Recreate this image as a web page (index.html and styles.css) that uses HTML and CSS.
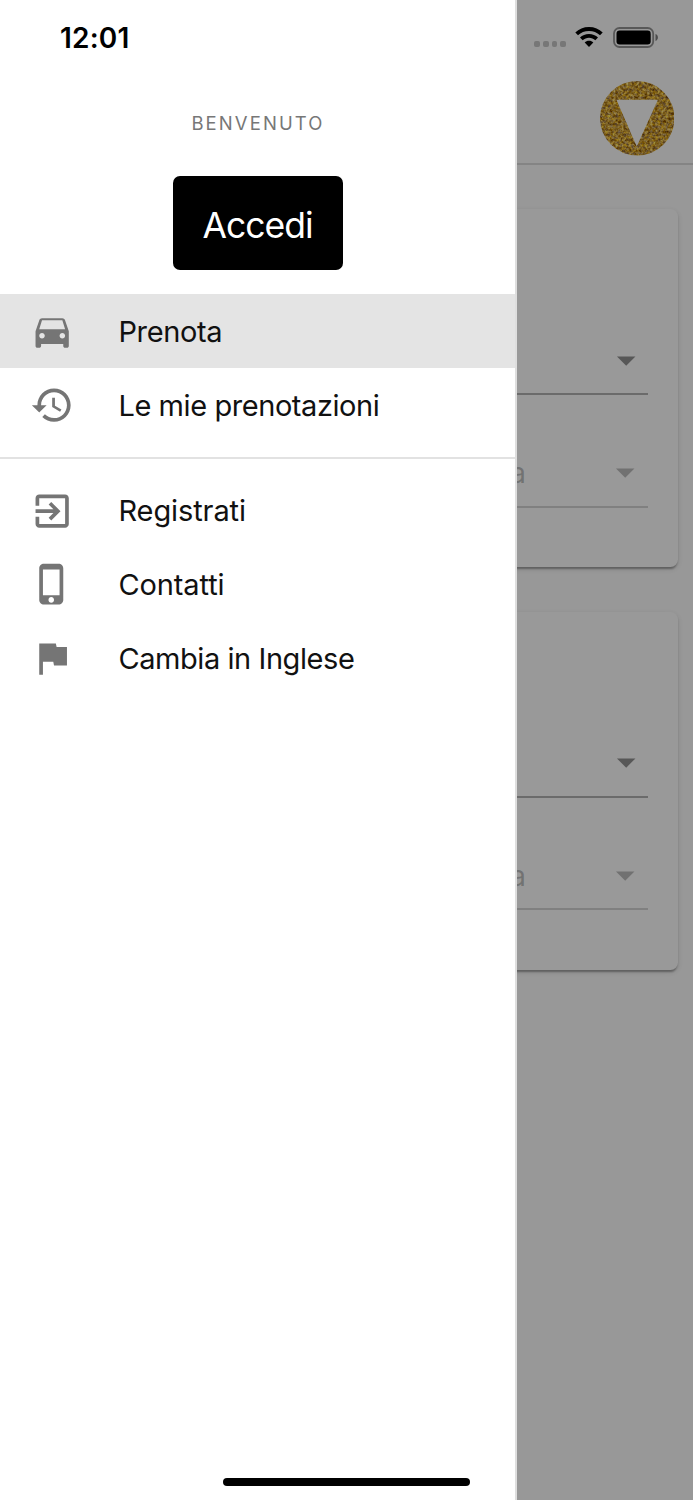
FILE: index.html
```html
<!DOCTYPE html>
<html lang="it">
<head>
    <meta charset="utf-8">
    <title>Prenota</title>
    <link rel="stylesheet" href="styles.css">
</head>
<body>

    <!-- Booking page -->
    <div class="page">
        <header class="app-bar">
            <svg class="logo" viewBox="0 0 74 74">
                <defs>
                    <filter id="glitter" x="0" y="0" width="100%" height="100%" color-interpolation-filters="sRGB">
                        <feTurbulence type="fractalNoise" baseFrequency="0.38" numOctaves="3" seed="7" result="noise"/>
                        <feColorMatrix in="noise" type="matrix" values="1 0 0 0 0.3  1 0.2 0 0 0.02  0.5 0.8 0 0 -0.42  0 0 0 0 1"/>
                        <feComposite in2="SourceGraphic" operator="in"/>
                    </filter>
                </defs>
                <path filter="url(#glitter)" fill="#c48c2a" fill-rule="evenodd" d="M37 0a37 37 0 1 1 0 74a37 37 0 1 1 0-74zM16.3 18.5L36.5 65L57.5 18.5z"/>
            </svg>
        </header>
        <main class="cards">
            <div class="card">
                <div class="field">
                    <svg class="icon" viewBox="0 0 24 24"><path d="M7 10l5 5 5-5z"/></svg>
                </div>
                <div class="field disabled">
                    <span class="value">a</span>
                    <svg class="icon" viewBox="0 0 24 24"><path d="M7 10l5 5 5-5z"/></svg>
                </div>
            </div>
            <div class="card">
                <div class="field">
                    <svg class="icon" viewBox="0 0 24 24"><path d="M7 10l5 5 5-5z"/></svg>
                </div>
                <div class="field disabled">
                    <span class="value">a</span>
                    <svg class="icon" viewBox="0 0 24 24"><path d="M7 10l5 5 5-5z"/></svg>
                </div>
            </div>
        </main>
    </div>

    <div class="backdrop"></div>

    <!-- Side menu -->
    <nav class="drawer">
        <div class="welcome">Benvenuto</div>
        <button class="login">Accedi</button>
        <ul class="menu">
            <li class="selected">
                <svg class="icon" viewBox="0 0 24 24"><path d="M18.92 6.01C18.72 5.42 18.16 5 17.5 5h-11c-.66 0-1.21.42-1.42 1.01L3 12v8c0 .55.45 1 1 1h1c.55 0 1-.45 1-1v-1h12v1c0 .55.45 1 1 1h1c.55 0 1-.45 1-1v-8l-2.08-5.99zM6.5 16c-.83 0-1.5-.67-1.5-1.5S5.67 13 6.5 13s1.5.67 1.5 1.5S7.33 16 6.5 16zm11 0c-.83 0-1.5-.67-1.5-1.5s.67-1.5 1.5-1.5 1.5.67 1.5 1.5-.67 1.5-1.5 1.5zM5 11l1.5-4.9h11L19 11H5z"/></svg>
                <span>Prenota</span>
            </li>
            <li>
                <svg class="icon" viewBox="0 0 24 24"><path d="M13 3c-4.97 0-9 4.03-9 9H1l3.89 3.89.07.14L9 12H6c0-3.87 3.13-7 7-7s7 3.13 7 7-3.13 7-7 7c-1.93 0-3.68-.79-4.94-2.06l-1.42 1.42C8.27 19.99 10.51 21 13 21c4.97 0 9-4.03 9-9s-4.03-9-9-9zm-1 5v5l4.28 2.54.72-1.21-3.5-2.08V8H12z"/></svg>
                <span class="tight">Le mie prenotazioni</span>
            </li>
        </ul>
        <ul class="menu">
            <li>
                <svg class="icon" viewBox="0 0 24 24"><path d="M10.09 15.59L11.5 17l5-5-5-5-1.41 1.41L12.67 11H3v2h9.67l-2.58 2.59zM19 3H5c-1.11 0-2 .9-2 2v4h2V5h14v14H5v-4H3v4c0 1.1.89 2 2 2h14c1.1 0 2-.9 2-2V5c0-1.1-.9-2-2-2z"/></svg>
                <span class="loose">Registrati</span>
            </li>
            <li>
                <svg class="icon" viewBox="0 0 24 24"><path d="M15.5 1h-8C6.12 1 5 2.12 5 3.5v17C5 21.88 6.12 23 7.5 23h8c1.38 0 2.5-1.12 2.5-2.5v-17C18 2.12 16.88 1 15.5 1zm-4 21c-.83 0-1.5-.67-1.5-1.5s.67-1.5 1.5-1.5 1.5.67 1.5 1.5-.67 1.5-1.5 1.5zm4.5-4H7V4h9v14z"/></svg>
                <span class="loose">Contatti</span>
            </li>
            <li>
                <svg class="icon" viewBox="0 0 24 24"><path d="M14.4 6L14 4H5v17h2v-7h5.6l.4 2h7V6z"/></svg>
                <span class="tight">Cambia in Inglese</span>
            </li>
        </ul>
    </nav>

    <!-- Phone status bar and home indicator -->
    <div class="status-bar">
        <span class="time">12:01</span>
        <div class="signal"><i></i><i></i><i></i><i></i></div>
        <svg class="wifi" viewBox="0 0 28 20">
            <path d="M14 0C19.4 0 24.2 2 27.7 5.5L25 8.3C22.1 5.5 18.3 4 14 4S5.9 5.5 3 8.3L.3 5.5C3.8 2 8.6 0 14 0z"/>
            <path d="M14 7C17.5 7 20.7 8.3 23 10.6L20.3 13.3C18.6 11.7 16.4 10.8 14 10.8S9.4 11.7 7.7 13.3L5 10.6C7.3 8.3 10.5 7 14 7z"/>
            <path d="M14 13.7C15.7 13.7 17.2 14.3 18.3 15.4L14 19.9L9.7 15.4C10.8 14.3 12.3 13.7 14 13.7z"/>
        </svg>
        <svg class="battery" viewBox="0 0 46 21">
            <rect x="1" y="1" width="39.2" height="19" rx="5.5" fill="none" stroke="#000" stroke-opacity=".42" stroke-width="1.8"/>
            <rect x="3.5" y="3.5" width="34.2" height="14" rx="3.2"/>
            <path d="M42.5 7c1.5.6 2.4 1.9 2.4 3.5s-.9 2.9-2.4 3.5z" fill-opacity=".5"/>
        </svg>
    </div>
    <div class="home-indicator"></div>

</body>
</html>
```
FILE: styles.css
```css
* {
    box-sizing: border-box;
}

body {
    margin: 0;
    height: 1500px;
    position: relative;
    overflow: hidden;
    background: #fff;
    font-family: Inter, Roboto, sans-serif;
    color: #111;
}

/* Booking page */
.page {
    height: 1500px;
    background: #fefefe;
}

.app-bar {
    height: 165px;
    padding: 81px 19px 0 0;
    display: flex;
    justify-content: flex-end;
    align-items: flex-start;
    border-bottom: 2px solid #dcdcdc;
}

.logo {
    width: 74.5px;
    height: 74.5px;
}

.cards {
    padding: 44px 15px;
    display: flex;
    flex-direction: column;
    gap: 44.6px;
}

.card {
    height: 358px;
    padding: 111.2px 30px 0;
    border-radius: 7.5px;
    background: #fff;
    box-shadow: 0 4px 2px -2px rgba(0, 0, 0, 0.2), 0 2px 2px rgba(0, 0, 0, 0.14), 0 2px 6px rgba(0, 0, 0, 0.12);
}

.field {
    height: 75px;
    padding-top: 17.6px;
    display: flex;
    justify-content: flex-end;
    border-bottom: 2px solid rgba(0, 0, 0, 0.3);
}

.field .icon {
    fill: rgba(0, 0, 0, 0.43);
}

.field.disabled {
    margin-top: 37.7px;
    border-bottom-color: rgba(0, 0, 0, 0.16);
}

.field.disabled .icon {
    margin-right: 0.6px;
    fill: rgba(0, 0, 0, 0.26);
}

.value {
    margin-right: 77px;
    font-size: 29.6px;
    line-height: 44px;
    color: rgba(0, 0, 0, 0.26);
}

.icon {
    width: 44.35px;
    height: 44.35px;
    flex-shrink: 0;
    fill: #757575;
}

.backdrop {
    position: absolute;
    inset: 0;
    background: rgba(0, 0, 0, 0.4);
}

/* Side menu */
.drawer {
    position: absolute;
    top: 0;
    left: 0;
    width: 517px;
    height: 1500px;
    padding-top: 105px;
    background: #fff;
    border-right: 2px solid #dedede;
}

.welcome {
    height: 36px;
    line-height: 36px;
    padding-left: 1px;
    text-align: center;
    text-transform: uppercase;
    font-size: 18.5px;
    letter-spacing: 2.1px;
    color: #777;
}

.login {
    display: block;
    width: 170px;
    height: 94.5px;
    margin: 34.9px auto 24px;
    padding: 4px 0 0;
    border: none;
    border-radius: 7px;
    background: #000;
    color: #fff;
    font-family: inherit;
    font-size: 35.5px;
    letter-spacing: -1px;
}

.menu {
    list-style: none;
    margin: 0;
    padding: 0;
}

.menu + .menu {
    margin-top: 14.8px;
    padding-top: 14.8px;
    border-top: 2px solid #e2e2e2;
}

.menu li {
    height: 73.9px;
    padding-left: 29.6px;
    display: flex;
    align-items: center;
    gap: 44.5px;
    font-size: 29px;
    letter-spacing: -0.35px;
}

.menu .tight {
    letter-spacing: -0.43px;
}

.menu .loose {
    letter-spacing: -0.1px;
}

.menu .selected {
    background: #e4e4e4;
}

/* Status bar */
.status-bar {
    position: absolute;
    top: 0;
    left: 0;
    right: 0;
    height: 74px;
    padding: 0 34.3px 0 60px;
    display: flex;
    align-items: center;
}

.time {
    margin: 1px auto 0 0;
    font-size: 28px;
    font-weight: 600;
    letter-spacing: 0.2px;
    color: #000;
}

.signal {
    display: flex;
    gap: 3px;
    margin: 14px 9px 0 0;
}

.signal i {
    width: 5.7px;
    height: 5.7px;
    border-radius: 2px;
    background: #777;
}

.wifi {
    width: 28px;
    height: 20px;
    margin-right: 9.7px;
}

.battery {
    width: 46px;
    height: 21px;
}

.home-indicator {
    position: absolute;
    bottom: 13.7px;
    left: 222.5px;
    width: 247.5px;
    height: 8.5px;
    border-radius: 5px;
    background: #000;
}
```
